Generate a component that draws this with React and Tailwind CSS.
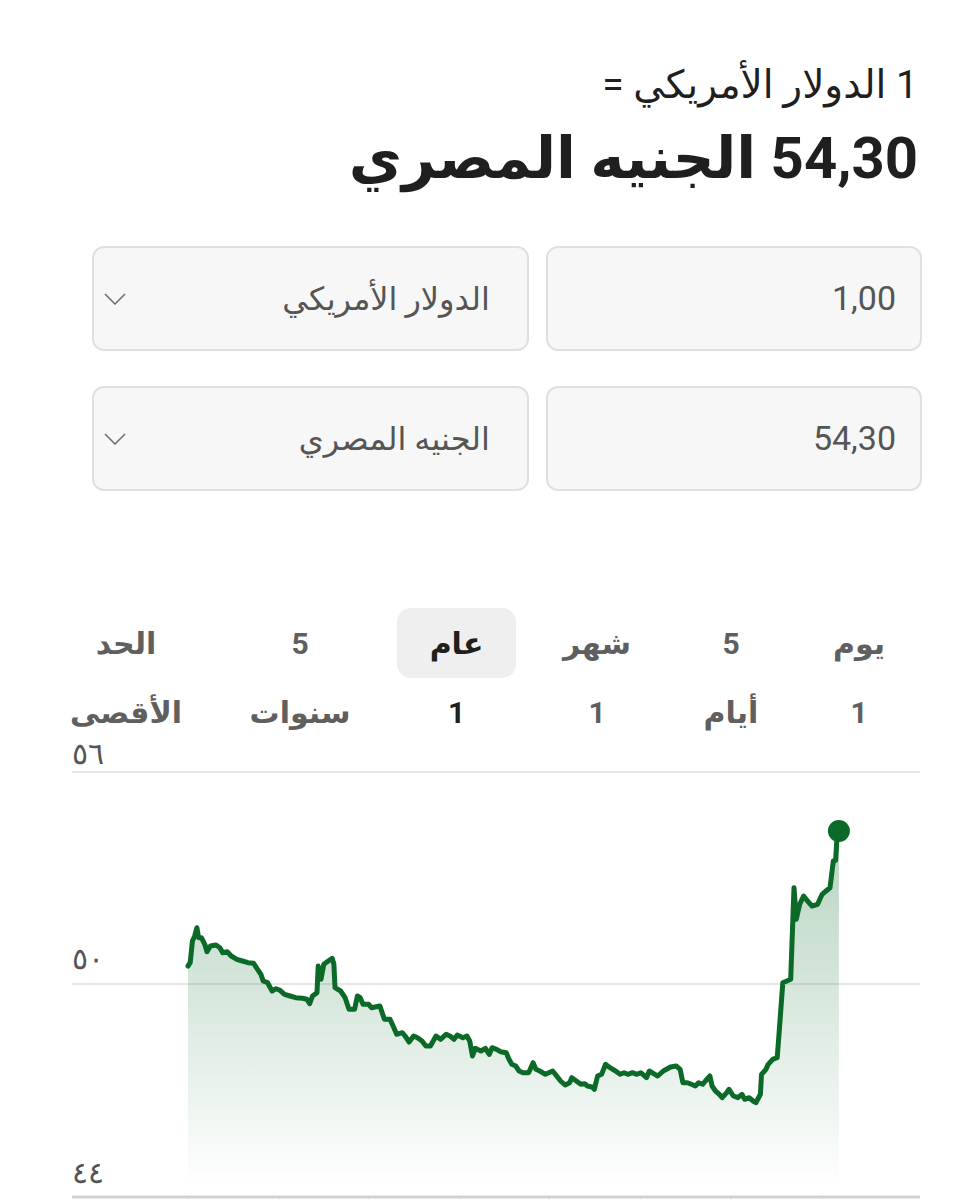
import React, { useState } from "react";

const FONT = { fontFamily: "Roboto, 'DejaVu Sans', sans-serif" };

const TABS = [
  { top: "يوم", bottom: "1", w: "w-[124px]" },
  { top: "5", bottom: "أيام", w: "w-[132px]" },
  { top: "شهر", bottom: "1", w: "w-[136px]" },
  { top: "عام", bottom: "1", w: "w-[145px]" },
  { top: "5", bottom: "سنوات", w: "w-[168px]" },
  { top: "الحد", bottom: "الأقصى", w: "w-[180px]" },
];

// traced rate curve (raw trace units)
const RAW = [
  [228, 615], [232, 605], [236, 540], [240, 525], [244, 500], [247, 530], [252, 530], [258, 550],
  [262, 572], [268, 555], [278, 552], [285, 560], [290, 575], [298, 572], [305, 585], [315, 595],
  [325, 600], [335, 605], [345, 607], [350, 620], [358, 640], [362, 660], [370, 665], [378, 690],
  [385, 683], [392, 688], [400, 700], [410, 705], [420, 710], [432, 712], [440, 715], [445, 728],
  [450, 705], [458, 695], [460, 615], [465, 655], [470, 610], [478, 600], [485, 592], [488, 610],
  [490, 680], [500, 690], [508, 710], [515, 745], [525, 745], [530, 705], [535, 710], [540, 730],
  [550, 730], [555, 740], [570, 735], [578, 775], [588, 775], [595, 800], [600, 820], [610, 815],
  [615, 825], [622, 843], [630, 825], [637, 830], [645, 840], [652, 855], [660, 855], [670, 825],
  [678, 835], [688, 820], [695, 825], [702, 835], [708, 822], [718, 830], [725, 825], [730, 840],
  [735, 885], [740, 862], [750, 870], [758, 862], [765, 880], [770, 860], [778, 865], [785, 872],
  [795, 875], [800, 895], [805, 910], [812, 915], [818, 930], [825, 935], [835, 935], [843, 905],
  [848, 925], [855, 930], [865, 940], [878, 930], [885, 945], [892, 960], [900, 972], [908, 965],
  [912, 950], [920, 960], [928, 970], [935, 968], [940, 975], [948, 978], [952, 985], [958, 945],
  [965, 940], [972, 910], [980, 920], [990, 930], [998, 940], [1005, 935], [1012, 940], [1020, 935],
  [1028, 940], [1035, 935], [1045, 950], [1050, 930], [1060, 940], [1065, 945], [1075, 930], [1088, 918],
  [1098, 915], [1105, 925], [1110, 965], [1118, 965], [1125, 970], [1132, 975], [1138, 965], [1145, 970],
  [1150, 960], [1158, 945], [1162, 975], [1168, 990], [1175, 1000], [1180, 1010], [1188, 995], [1192, 985],
  [1200, 1005], [1208, 1010], [1215, 1000], [1220, 1015], [1228, 1010], [1235, 1020], [1240, 1025], [1248, 1000],
  [1250, 940], [1258, 925], [1262, 910], [1270, 895], [1278, 890], [1282, 800], [1288, 665], [1295, 660],
  [1302, 655], [1308, 380], [1312, 475], [1318, 430], [1325, 405], [1332, 420], [1340, 435], [1350, 430],
  [1358, 400], [1365, 390], [1372, 380], [1378, 300], [1382, 298], [1385, 215], [1388, 210],
];

const PTS = RAW.map(([x, y]) => [+(x * 0.5612 - 12).toFixed(1), +(y / 3 + 30).toFixed(1)]);
const LINE = "M" + PTS.map((p) => p.join(" ")).join(" L");
const FIRST = PTS[0];
const LAST = PTS[PTS.length - 1];
const AREA = `${LINE} L${LAST[0]} 457 L${FIRST[0]} 457 Z`;
const TICKS = [116, 207, 297, 388, 477, 569, 659, 750];

function Chevron() {
  return (
    <svg width="22" height="12" viewBox="0 0 22 12" fill="none">
      <path d="M1 1 L11 11 L21 1" stroke="#6b6b6b" strokeWidth="1.5" />
    </svg>
  );
}

function ConverterRow({ amount, currency }) {
  return (
    <div className="flex gap-[17px] h-[105px]">
      <div className="w-[376px] h-full rounded-[12px] border-2 border-[#e0e0e0] bg-[#f7f7f7] flex items-center pr-[24px]">
        <span className="text-[34px] text-[#555555]">{amount}</span>
      </div>
      <div className="w-[437px] h-full rounded-[12px] border-2 border-[#e0e0e0] bg-[#f7f7f7] flex items-center justify-between pr-[37px] pl-[10px]">
        <span className="text-[32px] text-[#555555]">{currency}</span>
        <Chevron />
      </div>
    </div>
  );
}

function RateChart() {
  return (
    <svg width="848" height="469" viewBox="0 0 848 469" className="block">
      <defs>
        <linearGradient id="fillGrad" x1="0" y1="0" x2="0" y2="1">
          <stop offset="0%" stopColor="#0d6e2d" stopOpacity="0.3" />
          <stop offset="100%" stopColor="#0d6e2d" stopOpacity="0" />
        </linearGradient>
      </defs>
      <line x1="0" y1="41" x2="848" y2="41" stroke="#e6e6e6" strokeWidth="2" />
      <line x1="0" y1="253" x2="848" y2="253" stroke="#e6e6e6" strokeWidth="2" />
      <line x1="0" y1="466" x2="848" y2="466" stroke="#d2d2d2" strokeWidth="3" />
      {TICKS.map((x) => (
        <line key={x} x1={x} y1="466" x2={x} y2="469" stroke="#d2d2d2" strokeWidth="1" />
      ))}
      <g fill="#555555" fontSize="30" style={{ fontFamily: "'DejaVu Sans', sans-serif", fontWeight: 300 }}>
        <text x="0" y="33">٥٦</text>
        <text x="0" y="238">٥٠</text>
        <text x="0" y="452">٤٤</text>
      </g>
      <path d={AREA} fill="url(#fillGrad)" />
      <path d={LINE} fill="none" stroke="#0b6a27" strokeWidth="5" strokeLinejoin="round" strokeLinecap="round" />
      <circle cx={LAST[0]} cy={LAST[1]} r="11" fill="#0b6a27" />
    </svg>
  );
}

export default function App() {
  const [active, setActive] = useState(3);

  return (
    <div dir="rtl" className="w-[966px] min-h-[1199px] bg-white overflow-hidden" style={FONT}>
      <div className="pr-[48px] pt-[61px]">
        <div className="text-[39px] leading-[48px] text-[#1f1f1f]">1 الدولار الأمريكي =</div>
        <div className="mt-[15px] text-[58px] leading-[68px] font-bold text-[#1f1f1f]">54,30 الجنيه المصري</div>
      </div>

      <div className="pr-[44px] mt-[54px] flex flex-col gap-[35px]">
        <ConverterRow amount="1,00" currency="الدولار الأمريكي" />
        <ConverterRow amount="54,30" currency="الجنيه المصري" />
      </div>

      <div className="pr-[45px] mt-[117px] flex">
        {TABS.map((tab, i) => (
          <button
            key={i}
            onClick={() => setActive(i)}
            className={`${tab.w} shrink-0 flex flex-col items-center font-bold text-[30px] ${
              active === i ? "text-[#1f1f1f]" : "text-[#5f5f5f]"
            }`}
          >
            <span
              className={`h-[70px] px-[33px] flex items-center rounded-[14px] ${
                active === i ? "bg-[#efefef]" : ""
              }`}
            >
              {tab.top}
            </span>
            <span className="mt-[17px] h-[36px] leading-[36px]">{tab.bottom}</span>
          </button>
        ))}
      </div>

      <div dir="ltr" className="pl-[72px]">
        <RateChart />
      </div>
    </div>
  );
}
